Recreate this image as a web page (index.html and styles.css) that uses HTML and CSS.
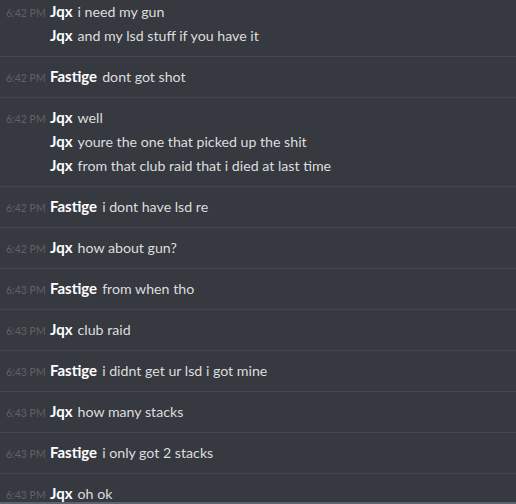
FILE: index.html
```html
<!DOCTYPE html>
<html>
<head>
<meta charset="utf-8">
<link rel="stylesheet" href="styles.css">
</head>
<body>
<div class="chat">
  <div class="group first">
    <div class="msg"><span class="ts">6:42 PM</span><span class="user">Jqx</span><span class="text">i need my gun</span></div>
    <div class="msg"><span class="ts"></span><span class="user">Jqx</span><span class="text">and my lsd stuff if you have it</span></div>
  </div>
  <div class="group">
    <div class="msg"><span class="ts">6:42 PM</span><span class="user">Fastige</span><span class="text">dont got shot</span></div>
  </div>
  <div class="group">
    <div class="msg"><span class="ts">6:42 PM</span><span class="user">Jqx</span><span class="text">well</span></div>
    <div class="msg"><span class="ts"></span><span class="user">Jqx</span><span class="text">youre the one that picked up the shit</span></div>
    <div class="msg"><span class="ts"></span><span class="user">Jqx</span><span class="text">from that club raid that i died at last time</span></div>
  </div>
  <div class="group">
    <div class="msg"><span class="ts">6:42 PM</span><span class="user">Fastige</span><span class="text">i dont have lsd re</span></div>
  </div>
  <div class="group">
    <div class="msg"><span class="ts">6:42 PM</span><span class="user">Jqx</span><span class="text">how about gun?</span></div>
  </div>
  <div class="group">
    <div class="msg"><span class="ts">6:43 PM</span><span class="user">Fastige</span><span class="text">from when tho</span></div>
  </div>
  <div class="group">
    <div class="msg"><span class="ts">6:43 PM</span><span class="user">Jqx</span><span class="text">club raid</span></div>
  </div>
  <div class="group">
    <div class="msg"><span class="ts">6:43 PM</span><span class="user">Fastige</span><span class="text">i didnt get ur lsd i got mine</span></div>
  </div>
  <div class="group">
    <div class="msg"><span class="ts">6:43 PM</span><span class="user">Jqx</span><span class="text">how many stacks</span></div>
  </div>
  <div class="group">
    <div class="msg"><span class="ts">6:43 PM</span><span class="user">Fastige</span><span class="text">i only got 2 stacks</span></div>
  </div>
  <div class="group last">
    <div class="msg"><span class="ts">6:43 PM</span><span class="user">Jqx</span><span class="text">oh ok</span></div>
  </div>
</div>
<div class="bottom-bar"></div>
</body>
</html>
```
FILE: styles.css
```css
html, body {
  margin: 0;
  padding: 0;
  height: 100%;
  background: #36393f;
  overflow: hidden;
}
body {
  display: flex;
  flex-direction: column;
  font-family: Lato, "Open Sans", sans-serif;
}
.chat {
  flex: 1;
  overflow: hidden;
  display: flex;
  flex-direction: column;
}
.group {
  display: flex;
  flex-direction: column;
  gap: 1px;
  padding: 8px 0 9px 0;
  border-bottom: 1px solid #42464d;
}
.group.first {
  padding-top: 0;
}
.group.last {
  border-bottom: none;
}
.msg {
  display: flex;
  align-items: baseline;
  height: 23px;
  line-height: 23px;
  white-space: nowrap;
}
.ts {
  width: 44px;
  flex: none;
  padding-left: 6px;
  box-sizing: border-box;
  font-size: 10.5px;
  color: #5f6268;
}
.user {
  margin-left: 6px;
  font-size: 15px;
  font-weight: 700;
  color: #ffffff;
}
.text {
  margin-left: 5px;
  font-size: 14.2px;
  color: #dcddde;
}
.bottom-bar {
  flex: none;
  height: 2px;
  background: #5c6470;
}
```
